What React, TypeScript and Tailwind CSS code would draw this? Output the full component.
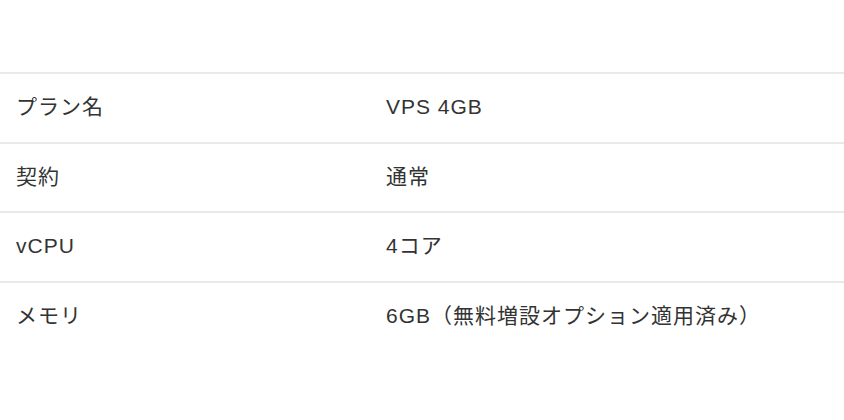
const rows: [string, string][] = [
  ["プラン名", "VPS 4GB"],
  ["契約", "通常"],
  ["vCPU", "4コア"],
  ["メモリ", "6GB（無料増設オプション適用済み）"],
];

export default function App() {
  return (
    <div
      className="w-[844px] h-[420px] bg-white pt-[72px] text-[#333] text-[21px] tracking-[1px]"
      style={{ fontFamily: '"Liberation Sans", "Noto Sans CJK JP", sans-serif' }}
    >
      <table className="w-full border-collapse">
        <tbody>
          {rows.map(([label, value]) => (
            <tr key={label} className="border-t-2 border-[#e9e9e9] h-[69.5px]">
              <td className="w-[386px] pl-4 pb-[2px] align-middle">{label}</td>
              <td className="pb-[2px] align-middle">{value}</td>
            </tr>
          ))}
        </tbody>
      </table>
    </div>
  );
}
